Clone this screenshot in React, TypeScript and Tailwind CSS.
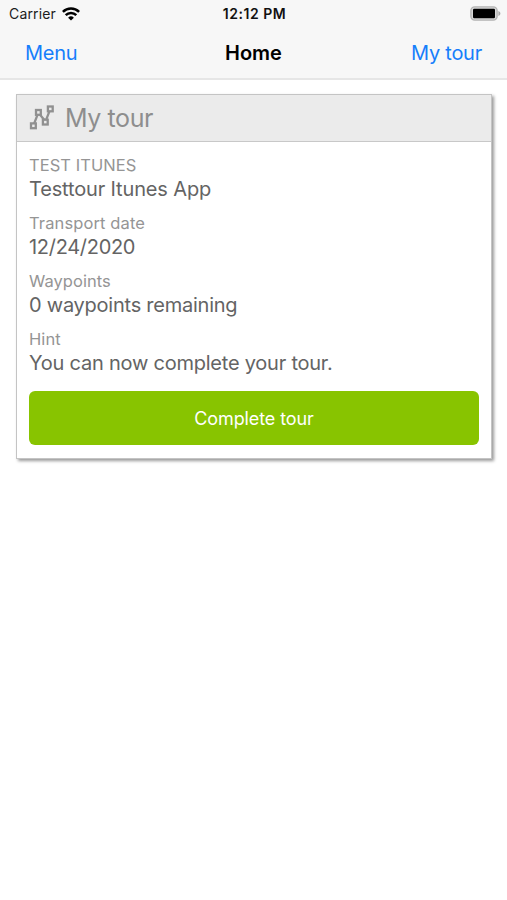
import React from 'react';

interface TourField {
  label: string;
  value: string;
  labelClass: string;
  valueClass: string;
}

const fields: TourField[] = [
  { label: 'TEST ITUNES', value: 'Testtour Itunes App', labelClass: 'tracking-[0.05px]', valueClass: 'tracking-[-0.15px]' },
  { label: 'Transport date', value: '12/24/2020', labelClass: 'tracking-[0.12px]', valueClass: 'tracking-[-0.3px]' },
  { label: 'Waypoints', value: '0 waypoints remaining', labelClass: 'tracking-[0.05px]', valueClass: 'tracking-[-0.24px]' },
  { label: 'Hint', value: 'You can now complete your tour.', labelClass: 'tracking-[0.1px]', valueClass: 'tracking-[-0.23px]' },
];

const WifiIcon: React.FC = () => (
  <svg width="18" height="14" viewBox="0 0 18 14" fill="none" stroke="#000" strokeWidth="2.5">
    <path d="M0.9 4.8a11.6 11.6 0 0 1 16.2 0" />
    <path d="M3.7 8.1a7.5 7.5 0 0 1 10.6 0" />
    <path d="M9 13.6 6.1 10.7a4.1 4.1 0 0 1 5.8 0z" fill="#000" stroke="none" />
  </svg>
);

const BatteryIcon: React.FC = () => (
  <svg width="31" height="15" viewBox="0 0 31 15">
    <rect x="0.9" y="0.9" width="26.2" height="13.2" rx="3.8" fill="#d8d8d8" stroke="#b3b3b3" strokeWidth="1.4" />
    <rect x="3" y="2.8" width="22" height="9.4" rx="1.2" fill="#000" />
    <path d="M28.4 5v5c1.2-.4 2-1.4 2-2.5s-.8-2.1-2-2.5z" fill="#a8a8a8" />
  </svg>
);

const TourIcon: React.FC = () => (
  <svg width="26" height="26" viewBox="0 0 26 26" fill="none" stroke="#909090" strokeWidth="2.3">
    <rect x="2" y="18.4" width="4.8" height="4.8" />
    <rect x="7" y="5" width="4.8" height="4.8" />
    <rect x="13.9" y="14.7" width="4.8" height="4.8" />
    <rect x="18.9" y="1.5" width="4.8" height="4.8" />
    <path d="M5.2 18.4 8.5 9.8M11 9.8l4.2 4.9M17.2 14.7l3.2-8.4" />
  </svg>
);

const App: React.FC = () => {
  return (
    <div className="w-full h-screen bg-white overflow-hidden font-['Inter',sans-serif]">
      <header className="h-[80px] bg-[#f7f7f7] border-b-2 border-[#e6e6e6]">
        {/* Status bar */}
        <div className="h-[27px] grid grid-cols-3 items-center pl-[8px] pr-[6px] text-[14px] text-[#1c1c1c]">
          <div className="flex items-center gap-[6px] pl-px">
            <span className="tracking-[0.15px]">Carrier</span>
            <WifiIcon />
          </div>
          <span className="text-center font-semibold text-[#111] tracking-[0.55px] whitespace-nowrap">12:12 PM</span>
          <div className="flex justify-end">
            <BatteryIcon />
          </div>
        </div>

        {/* Navigation bar */}
        <div className="h-[51px] grid grid-cols-3 items-center px-[25px] text-[20px] text-[#167efb]">
          <button className="text-left tracking-[-0.3px]">Menu</button>
          <h1 className="text-center font-semibold text-black">Home</h1>
          <button className="text-right tracking-[-0.25px]">My tour</button>
        </div>
      </header>

      <main className="pt-[14px] pl-[16px] pr-[15px]">
        <section className="border border-[#c4c4c4] bg-white shadow-[2px_2px_3px_rgba(0,0,0,0.4)]">
          <div className="h-[47px] flex items-center gap-[10px] pl-[12px] bg-[#ebebeb] border-b border-[#c8c8c8]">
            <TourIcon />
            <h2 className="pt-px text-[25px] tracking-[-0.4px] text-[#8e8e8e]">My tour</h2>
          </div>

          <div className="px-[12px] pt-[12px] pb-[13px]">
            {fields.map((field) => (
              <div key={field.label} className="h-[58px]">
                <div className={`text-[16.5px] leading-[23px] text-[#959595] ${field.labelClass}`}>{field.label}</div>
                <div className={`text-[20px] leading-[24px] text-[#646464] ${field.valueClass}`}>{field.value}</div>
              </div>
            ))}
            <button className="mt-[5px] block w-full h-[54px] rounded-[6px] bg-[#88c400] text-white text-[18px] tracking-[-0.1px]">
              Complete tour
            </button>
          </div>
        </section>
      </main>
    </div>
  );
};

export default App;
